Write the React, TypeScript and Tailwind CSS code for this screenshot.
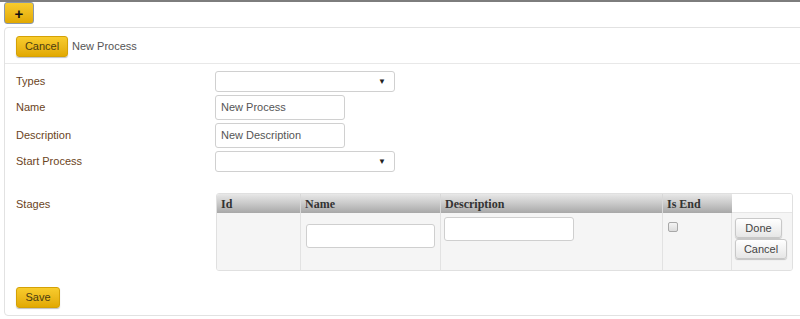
import React from 'react';

const font = { fontFamily: '"Liberation Sans", Arial, sans-serif' };

function GoldButton({ children, className = '' }: { children: React.ReactNode; className?: string }) {
  return (
    <button
      type="button"
      className={`h-[21px] rounded-[3px] border border-[#d4a106] bg-gradient-to-b from-[#f8cc2c] to-[#e2a900] text-[11px] text-[#4a3c12] shadow-[0_1px_1px_rgba(0,0,0,0.25)] ${className}`}
    >
      {children}
    </button>
  );
}

function GrayButton({ children, className = '' }: { children: React.ReactNode; className?: string }) {
  return (
    <button
      type="button"
      className={`h-[20px] rounded-[3px] border border-[#c8c8c8] bg-gradient-to-b from-[#ffffff] to-[#e6e6e6] text-[11px] text-[#444] shadow-[0_1px_1px_rgba(0,0,0,0.2)] ${className}`}
    >
      {children}
    </button>
  );
}

function SelectBox() {
  return (
    <div className="flex h-[21px] w-[180px] items-center justify-end rounded-[3px] border border-[#d0d0d0] bg-white pr-[8px]">
      <span className="text-[8px] leading-none text-[#222]">▼</span>
    </div>
  );
}

function TextBox({ value, className = '' }: { value: string; className?: string }) {
  return (
    <div
      className={`flex items-center rounded-[3px] border border-[#d0d0d0] bg-white px-[5px] text-[11px] text-[#555] ${className}`}
    >
      {value}
    </div>
  );
}

function Label({ children }: { children: React.ReactNode }) {
  return <div className="w-[199px] shrink-0 text-[11px] text-[#6b4423]">{children}</div>;
}

const headCell = 'flex items-center bg-gradient-to-b from-[#e8e8e8] via-[#c9c9c9] to-[#a8a8a8] pl-[4px]';

export default function App() {
  return (
    <div className="h-[319px] w-[800px] overflow-hidden bg-white" style={font}>
      <div className="h-[2px] bg-[#7d7d7d]" />
      <div className="flex h-[25px] items-start pl-[4px]">
        <button
          type="button"
          className="flex h-[22px] w-[30px] items-center justify-center rounded-[3px] border border-[#8a97a8] bg-gradient-to-b from-[#f8cc2c] to-[#e2a900] text-[15px] font-bold leading-none text-[#111]"
        >
          +
        </button>
      </div>
      <div className="ml-[4px] h-[289px] w-[810px] rounded-[4px] border border-[#e2e2e2]">
        <div className="flex h-[36px] items-center gap-[4px] border-b border-[#e8e8e8] pl-[11px] pt-[1px]">
          <GoldButton className="w-[52px]">Cancel</GoldButton>
          <span className="text-[11px] text-[#555]">New Process</span>
        </div>
        <div className="flex flex-col pl-[11px] pt-[7px]">
          <div className="flex items-center">
            <Label>Types</Label>
            <SelectBox />
          </div>
          <div className="mt-[3px] flex items-center">
            <Label>Name</Label>
            <TextBox value="New Process" className="h-[25px] w-[130px]" />
          </div>
          <div className="mt-[3px] flex items-center">
            <Label>Description</Label>
            <TextBox value="New Description" className="h-[25px] w-[130px]" />
          </div>
          <div className="mt-[3px] flex items-center">
            <Label>Start Process</Label>
            <SelectBox />
          </div>
          <div className="mt-[21px] flex items-start">
            <div className="w-[200px] shrink-0 pt-[3px] text-[11px] text-[#6b4423]">Stages</div>
            <div className="w-[577px] overflow-hidden rounded-[3px] border border-[#e0e0e0]">
              <div
                className="flex h-[19px] text-[12px] font-bold text-[#333]"
                style={{ fontFamily: '"Liberation Serif", "Times New Roman", serif' }}
              >
                <div className={`w-[84px] border-r border-[#d8d8d8] ${headCell}`}>Id</div>
                <div className={`w-[140px] border-r border-[#d8d8d8] ${headCell}`}>Name</div>
                <div className={`w-[222px] border-r border-[#d8d8d8] ${headCell}`}>Description</div>
                <div className={`w-[69px] ${headCell}`}>Is End</div>
                <div className="flex-1 border-b border-[#e6e6e6] bg-white" />
              </div>
              <div className="flex h-[57px] bg-[#f5f5f5]">
                <div className="w-[84px] border-r border-[#e2e2e2]" />
                <div className="w-[140px] border-r border-[#e2e2e2] pl-[5px] pt-[11px]">
                  <div className="h-[24px] w-[129px] rounded-[3px] border border-[#cfcfcf] bg-white" />
                </div>
                <div className="w-[222px] border-r border-[#e2e2e2] pl-[3px] pt-[4px]">
                  <div className="h-[24px] w-[130px] rounded-[3px] border border-[#cfcfcf] bg-white" />
                </div>
                <div className="w-[69px] border-r border-[#e2e2e2] pl-[5px] pt-[9px]">
                  <div className="h-[10px] w-[10px] rounded-[2px] border border-[#a8a8a8] bg-gradient-to-b from-[#f4f4f4] to-[#dcdcdc]" />
                </div>
                <div className="flex flex-1 flex-col items-start pl-[3px] pt-[5px]">
                  <GrayButton className="w-[47px]">Done</GrayButton>
                  <GrayButton className="mt-[1px] w-[52px]">Cancel</GrayButton>
                </div>
              </div>
            </div>
          </div>
          <div className="mt-[13px]">
            <GoldButton className="w-[44px]">Save</GoldButton>
          </div>
        </div>
      </div>
    </div>
  );
}
